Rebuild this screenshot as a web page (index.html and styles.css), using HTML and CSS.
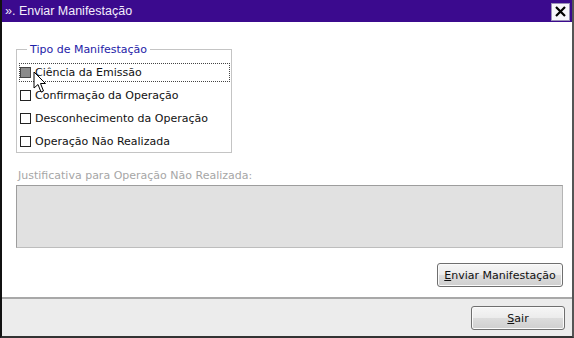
FILE: index.html
```html
<!DOCTYPE html>
<html lang="pt">
<head>
<meta charset="utf-8">
<title>Enviar Manifestação</title>
<link rel="stylesheet" href="styles.css">
</head>
<body>
<div class="window">
  <div class="titlebar">
    <span class="title">». Enviar Manifestação</span>
    <button class="close" aria-label="Fechar">
      <svg width="13" height="13" viewBox="0 0 13 13"><path d="M2 2 L11 11 M11 2 L2 11" stroke="#000" stroke-width="2.2" fill="none"/></svg>
    </button>
  </div>
  <div class="content">
    <fieldset class="group">
      <legend>Tipo de Manifestação</legend>
      <label class="opt focused"><span class="box pressed"></span>Ciência da Emissão</label>
      <label class="opt"><span class="box"></span>Confirmação da Operação</label>
      <label class="opt"><span class="box"></span>Desconhecimento da Operação</label>
      <label class="opt"><span class="box"></span>Operação Não Realizada</label>
      <svg class="cursor" width="14" height="23" viewBox="0 0 14 23"><path d="M1 1 L1 17 L5 13.5 L8 21 L10.5 20 L7.5 12.5 L12.5 12.5 Z" fill="#fff" stroke="#000" stroke-width="1"/></svg>
    </fieldset>
    <div class="just-label">Justificativa para Operação Não Realizada:</div>
    <div class="textarea"></div>
    <div class="actions">
      <button class="btn send"><u>E</u>nviar Manifestação</button>
    </div>
  </div>
  <div class="footer">
    <button class="btn exit"><u>S</u>air</button>
  </div>
</div>
</body>
</html>
```
FILE: styles.css
```css
* { box-sizing: border-box; }
html, body { margin: 0; padding: 0; background: #fff; }
body { font-family: "DejaVu Sans", Verdana, sans-serif; font-size: 11px; }

.window {
  width: 574px;
  height: 338px;
  display: flex;
  flex-direction: column;
  border-left: 2px solid #111;
  border-right: 2px solid #555;
  border-bottom: 2px solid #333;
  background: #fff;
}

.titlebar {
  height: 22px;
  background: #3b0a8e;
  display: flex;
  align-items: center;
  justify-content: space-between;
  padding: 0 2px 0 3px;
  flex: none;
}
.title {
  color: #f4eefc;
  font-family: "Liberation Sans", Arial, sans-serif;
  font-size: 12.5px;
}
.close {
  width: 19px;
  height: 18px;
  margin-top: 1px;
  padding: 0;
  border: 1px solid #9a90b8;
  background: #f7f5fb;
  display: flex;
  align-items: center;
  justify-content: center;
}

.content {
  flex: 1;
  display: flex;
  flex-direction: column;
  padding: 21px 9px 0 14px;
}

.group {
  position: relative;
  width: 216px;
  margin: 0;
  padding: 9px 0 4px 1px;
  border: 1px solid #c4c4c4;
  height: 110px;
}
.group legend {
  color: #1e22a8;
  padding: 0 3px;
  margin-left: 9px;
  line-height: 13px;
}

.opt {
  display: flex;
  align-items: center;
  height: 23px;
  color: #111;
  padding-left: 2px;
}
.opt.focused {
  outline: 1px dotted #444;
  outline-offset: -2px;
  height: 21px;
  margin-top: -3px;
  margin-bottom: 1px;
}
.box {
  width: 11px;
  height: 11px;
  border: 1px solid #222;
  background: #fff;
  margin-right: 4px;
  flex: none;
}
.box.pressed {
  background: #8a8a8a;
  border-color: #444;
}

.cursor {
  position: absolute;
  left: 16px;
  top: 15px;
}

.just-label {
  margin-top: 16px;
  margin-left: 2px;
  color: #a6a6a6;
  line-height: 14px;
}

.textarea {
  margin-top: 2px;
  height: 63px;
  background: #e1e1e1;
  border: 1px solid #9d9d9d;
  border-right-color: #b5b5b5;
  border-bottom-color: #bdbdbd;
}

.actions {
  display: flex;
  justify-content: flex-end;
  margin-top: 15px;
}

.btn {
  font-family: "DejaVu Sans", Verdana, sans-serif;
  font-size: 11px;
  color: #111;
  height: 24px;
  border: 1px solid #6f6f6f;
  border-radius: 3px;
  background: linear-gradient(#f6f6f6 0%, #ececec 48%, #dcdcdc 52%, #cfcfcf 100%);
  box-shadow: inset 0 0 0 1px #fbfbfb;
  padding: 0 6px;
}
.send { width: 126px; }

.footer {
  flex: none;
  height: 39px;
  background: #ececec;
  border-top: 2px solid #a8a8a8;
  display: flex;
  justify-content: flex-end;
  align-items: flex-start;
  padding: 7px 7px 0 0;
}
.exit { width: 94px; }
```
